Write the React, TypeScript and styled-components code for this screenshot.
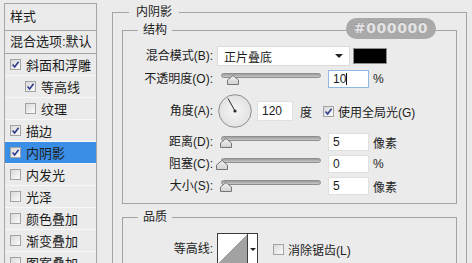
import styled, { createGlobalStyle } from 'styled-components';

const GlobalStyle = createGlobalStyle`
  html, body { margin: 0; padding: 0; }
  body {
    background: #ebebeb;
    font-family: "Liberation Sans", "Noto Sans CJK SC", sans-serif;
    color: #1c1c1c;
  }
`;

const Window = styled.div`
  display: flex;
  align-items: flex-start;
  gap: 15px;
  width: 472px;
  height: 263px;
  box-sizing: border-box;
  padding: 3px 0 0 4px;
  overflow: hidden;
  background: #ebebeb;
`;

/* ---------- left style list ---------- */

const Sidebar = styled.div`
  width: 93px;
  height: 300px;
  flex-shrink: 0;
  box-sizing: border-box;
  border: 1px solid #a6a6a6;
  font-size: 13px;
`;

const SideHeader = styled.div<{ $h: number }>`
  height: ${({ $h }) => $h}px;
  line-height: ${({ $h }) => $h}px;
  padding-left: 5px;
  border-bottom: 1px solid #a6a6a6;
  white-space: nowrap;
`;

const SideItem = styled.div<{ $indent?: boolean; $active?: boolean }>`
  display: flex;
  align-items: center;
  gap: 5px;
  height: 21px;
  padding-left: ${({ $indent }) => ($indent ? 20 : 5)}px;
  border-bottom: 1px solid #f7f7f7;
  background: ${({ $active }) => ($active ? '#3a8ee6' : 'transparent')};
  white-space: nowrap;
`;

const Box = styled.span`
  display: flex;
  align-items: center;
  justify-content: center;
  width: 11px;
  height: 11px;
  flex-shrink: 0;
  box-sizing: border-box;
  border: 1px solid #a3a3a3;
  background: linear-gradient(135deg, #d9d9d9, #fbfbfb);
`;

const CheckBox = ({ checked }: { checked?: boolean }) => (
  <Box>
    {checked && (
      <svg width="9" height="9" viewBox="0 0 9 9">
        <path d="M1.6 4.6 L3.6 6.9 L7.6 1.8" fill="none" stroke="#2a3a8c" strokeWidth="1.6" />
      </svg>
    )}
  </Box>
);

/* ---------- right panel ---------- */

const Main = styled.div`
  position: relative;
  width: 355px;
  flex-shrink: 0;
  padding-top: 2px;
  font-size: 12px;
`;

const Group = styled.fieldset<{ $outer?: boolean; $mt?: number }>`
  margin: ${({ $mt }) => $mt ?? 0}px 0 0;
  padding: ${({ $outer }) => ($outer ? '4px 9px 40px' : '0 0 8px')};
  border: 1px solid #a3a3a3;
  min-width: 0;
`;

const Legend = styled.legend<{ $outer?: boolean }>`
  padding: 0 ${({ $outer }) => ($outer ? 7 : 5)}px;
  margin-left: ${({ $outer }) => ($outer ? 7 : 15)}px;
  font-size: 12px;
  line-height: 14px;
`;

const ColorTip = styled.div`
  position: absolute;
  left: 234px;
  top: 15px;
  width: 90px;
  height: 21px;
  border-radius: 11px;
  background: #a9a9a9;
  color: #e4e4e4;
  font-family: "DejaVu Sans", sans-serif;
  font-weight: bold;
  font-size: 14px;
  line-height: 21px;
  letter-spacing: 0.6px;
  text-align: center;
  text-shadow: 0 -1px 0 rgba(0, 0, 0, 0.12);
`;

const Row = styled.div<{ $mt: number }>`
  display: flex;
  align-items: center;
  margin-top: ${({ $mt }) => $mt}px;
  white-space: nowrap;
`;

const Label = styled.span`
  width: 90px;
  text-align: right;
  line-height: 16px;
`;

const Select = styled.div`
  display: flex;
  align-items: center;
  justify-content: space-between;
  margin-left: 4px;
  width: 133px;
  height: 20px;
  box-sizing: border-box;
  padding: 0 6px 0 6px;
  background: #fff;
  border: 1px solid #dadada;
`;

const Arrow = styled.span`
  width: 0;
  height: 0;
  border-left: 4px solid transparent;
  border-right: 4px solid transparent;
  border-top: 4px solid #222;
`;

const Swatch = styled.span`
  margin-left: 3px;
  width: 34px;
  height: 16px;
  box-sizing: border-box;
  background: #000;
  border: 1px solid #8c8c8c;
`;

const Slider = styled.div`
  position: relative;
  margin-left: 8px;
  width: 100px;
  height: 18px;
  padding-top: 3px;
  box-sizing: border-box;
`;

const Track = styled.div`
  height: 5px;
  border-radius: 3px;
  box-sizing: border-box;
  border: 1px solid #8e8e8e;
  background: linear-gradient(#9a9a9a, #c8c8c8);
`;

const Thumb = styled.svg<{ $pos: number }>`
  position: absolute;
  top: 5px;
  left: ${({ $pos }) => $pos - 6}px;
`;

const Field = styled.div<{ $w?: number; $h?: number; $focus?: boolean; $ml?: number }>`
  display: flex;
  align-items: center;
  margin-left: ${({ $ml }) => $ml ?? 7}px;
  width: ${({ $w }) => $w ?? 41}px;
  height: ${({ $h }) => $h ?? 18}px;
  box-sizing: border-box;
  padding-left: 4px;
  background: #fff;
  border: 1px solid ${({ $focus }) => ($focus ? '#8fb8e6' : '#e0e0e0')};
  font-size: 12px;
`;

const Caret = styled.span`
  width: 1px;
  height: 12px;
  background: #111;
`;

const Unit = styled.span<{ $ml?: number }>`
  margin-left: ${({ $ml }) => $ml ?? 4}px;
`;

const Dial = styled.svg`
  margin-left: 5px;
  flex-shrink: 0;
`;

const ContourPicker = styled.div`
  display: flex;
  margin-left: 4px;
  width: 41px;
  height: 32px;
  box-sizing: border-box;
  border: 1px solid #3c3c3c;
  background: #fff;
`;

const ContourPreview = styled.div`
  width: 29px;
  height: 30px;
  background: linear-gradient(to bottom right, #fff 50%, #a3a3a3 50%);
  border-right: 1px solid #3c3c3c;
`;

const ContourDrop = styled.div`
  flex: 1;
  display: flex;
  align-items: center;
  justify-content: center;
`;

const SmallArrow = styled.span`
  width: 0;
  height: 0;
  border-left: 3px solid transparent;
  border-right: 3px solid transparent;
  border-top: 3px solid #222;
`;

const CheckLabel = styled.span<{ $ml: number }>`
  display: flex;
  align-items: center;
  gap: 4px;
  margin-left: ${({ $ml }) => $ml}px;
`;

const SliderControl = ({ pos }: { pos: number }) => (
  <Slider>
    <Track />
    <Thumb $pos={pos} width="12" height="10" viewBox="0 0 12 10">
      <defs>
        <linearGradient id="tg" x1="0" y1="0" x2="0" y2="1">
          <stop offset="0" stopColor="#f4f4f4" />
          <stop offset="1" stopColor="#cfcfcf" />
        </linearGradient>
      </defs>
      <path d="M6 0.5 L11.5 5 L11.5 9.5 L0.5 9.5 L0.5 5 Z" fill="url(#tg)" stroke="#767676" />
    </Thumb>
  </Slider>
);

const sliderRows = [
  { label: '距离(D):', pos: 5, value: '5', unit: '像素', mt: 5 },
  { label: '阻塞(C):', pos: 1, value: '0', unit: '%', mt: 4 },
  { label: '大小(S):', pos: 5, value: '5', unit: '像素', mt: 4 },
];

const styles = [
  { name: '斜面和浮雕', checked: true },
  { name: '等高线', checked: true, indent: true },
  { name: '纹理', indent: true },
  { name: '描边', checked: true },
  { name: '内阴影', checked: true, active: true },
  { name: '内发光' },
  { name: '光泽' },
  { name: '颜色叠加' },
  { name: '渐变叠加' },
  { name: '图案叠加' },
];

export default function App() {
  return (
    <>
      <GlobalStyle />
      <Window>
        <Sidebar>
          <SideHeader $h={26}>样式</SideHeader>
          <SideHeader $h={22}>混合选项:默认</SideHeader>
          {styles.map((s) => (
            <SideItem key={s.name} $indent={s.indent} $active={s.active}>
              <CheckBox checked={s.checked} />
              {s.name}
            </SideItem>
          ))}
        </Sidebar>

        <Main>
          <Group $outer>
            <Legend $outer>内阴影</Legend>

            <Group>
              <Legend>结构</Legend>
              <Row $mt={9}>
                <Label>混合模式(B):</Label>
                <Select>
                  正片叠底
                  <Arrow />
                </Select>
                <Swatch />
              </Row>
              <Row $mt={4}>
                <Label>不透明度(O):</Label>
                <SliderControl pos={12} />
                <Field $focus>
                  10
                  <Caret />
                </Field>
                <Unit>%</Unit>
              </Row>
              <Row $mt={6}>
                <Label>角度(A):</Label>
                <Dial width="34" height="34" viewBox="0 0 34 34">
                  <defs>
                    <radialGradient id="dg" cx="0.5" cy="0.5" r="0.5">
                      <stop offset="0" stopColor="#f5f5f5" />
                      <stop offset="1" stopColor="#e2e2e2" />
                    </radialGradient>
                  </defs>
                  <circle cx="17" cy="17" r="16.3" fill="url(#dg)" stroke="#8e8e8e" />
                  <line x1="17" y1="17" x2="10" y2="4.5" stroke="#2a2a2a" strokeWidth="1" />
                  <circle cx="17" cy="17" r="1.6" fill="#2a2a2a" />
                </Dial>
                <Field $w={36} $h={20} $ml={5}>120</Field>
                <Unit $ml={7}>度</Unit>
                <CheckLabel $ml={11}>
                  <CheckBox checked />
                  使用全局光(G)
                </CheckLabel>
              </Row>
              {sliderRows.map((r) => (
                <Row key={r.label} $mt={r.mt}>
                  <Label>{r.label}</Label>
                  <SliderControl pos={r.pos} />
                  <Field>{r.value}</Field>
                  <Unit>{r.unit}</Unit>
                </Row>
              ))}
            </Group>

            <Group $mt={6}>
              <Legend>品质</Legend>
              <Row $mt={9}>
                <Label>等高线:</Label>
                <ContourPicker>
                  <ContourPreview />
                  <ContourDrop>
                    <SmallArrow />
                  </ContourDrop>
                </ContourPicker>
                <CheckLabel $ml={15}>
                  <CheckBox />
                  消除锯齿(L)
                </CheckLabel>
              </Row>
            </Group>
          </Group>

          <ColorTip>#000000</ColorTip>
        </Main>
      </Window>
    </>
  );
}
